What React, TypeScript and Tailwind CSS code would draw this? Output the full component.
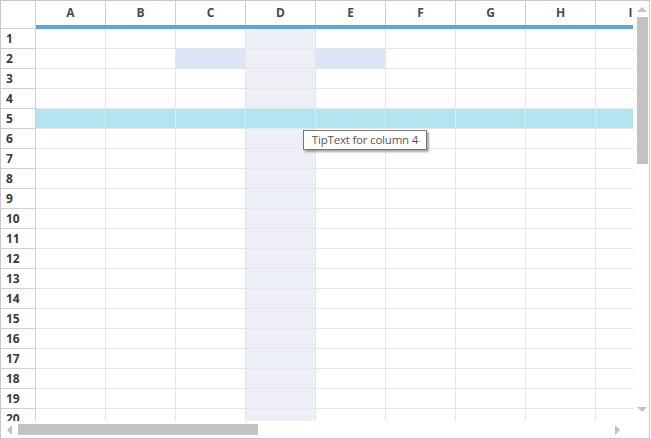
const cols = ['A', 'B', 'C', 'D', 'E', 'F', 'G', 'H', 'I', 'J']
const rows = Array.from({ length: 21 }, (_, i) => i + 1)

function cellBg(row: number, col: number) {
  if (row === 5) return 'bg-[#b3e5f0]'
  if (col === 3) return 'bg-[#eceff6]'
  if (row === 2 && (col === 2 || col === 4)) return 'bg-[#dbe5f5]'
  return 'bg-white'
}

export default function App() {
  return (
    <div className="w-[651px] h-[439px] bg-white font-['Open_Sans',sans-serif]">
      <div className="relative w-[650px] h-[439px] border border-[#c8c8c8] flex flex-col">
        <div className="flex h-[420px]">
          {/* grid viewport */}
          <div className="w-[632px] h-[420px] overflow-hidden flex flex-col">
            {/* header */}
            <div className="flex h-[28px] shrink-0">
              <div className="w-[35px] shrink-0 border-r border-b border-[#d0d0d0]" />
              {cols.map((c) => (
                <div key={c} className="w-[70px] shrink-0 flex flex-col">
                  <div className="h-[24px] border-r border-[#d0d0d0] flex items-center justify-center text-[12px] font-bold text-[#4a4a4a]">
                    {c}
                  </div>
                  <div className="h-[4px] bg-[#5ba7db]" />
                </div>
              ))}
            </div>
            {/* body */}
            {rows.map((r) => (
              <div key={r} className="flex h-[20px] shrink-0">
                <div className="w-[35px] shrink-0 border-r border-b border-[#d0d0d0] pl-[5px] flex items-center text-[12px] font-bold text-[#3a3a3a]">
                  {r}
                </div>
                {cols.map((c, i) => (
                  <div
                    key={c}
                    className={`w-[70px] shrink-0 border-r border-b border-[#e6e6e6] ${cellBg(r, i)}`}
                  />
                ))}
              </div>
            ))}
          </div>
          {/* vertical scrollbar */}
          <div className="w-[16px] flex flex-col items-center">
            <div className="h-[16px] flex items-center justify-center pt-[1px] pl-[2px]">
              <div className="w-0 h-0 border-l-[5px] border-r-[5px] border-b-[5px] border-l-transparent border-r-transparent border-b-[#c2c2c2]" />
            </div>
            <div className="w-[11px] h-[147px] bg-[#c2c2c2] ml-[2px]" />
            <div className="flex-1" />
            <div className="h-[14px] flex items-start justify-center pl-[2px]">
              <div className="w-0 h-0 border-l-[5px] border-r-[5px] border-t-[5px] border-l-transparent border-r-transparent border-t-[#c2c2c2]" />
            </div>
          </div>
        </div>
        {/* horizontal scrollbar */}
        <div className="flex h-[17px]">
          <div className="w-[632px] flex items-center">
            <div className="w-[17px] flex justify-center">
              <div className="w-0 h-0 border-t-[5px] border-b-[5px] border-r-[5px] border-t-transparent border-b-transparent border-r-[#c2c2c2]" />
            </div>
            <div className="w-[240px] h-[11px] bg-[#c2c2c2]" />
            <div className="flex-1" />
            <div className="w-[16px] flex justify-start mr-[2px]">
              <div className="w-0 h-0 border-t-[5px] border-b-[5px] border-l-[5px] border-t-transparent border-b-transparent border-l-[#c2c2c2]" />
            </div>
          </div>
        </div>
        {/* tooltip */}
        <div className="absolute left-[302px] top-[129px] w-[124px] h-[20px] flex items-center justify-center bg-white border border-[#767676] text-[11.5px] tracking-[-0.2px] text-[#575757] shadow-[2px_2px_2px_rgba(0,0,0,0.35)] whitespace-nowrap">
          TipText for column 4
        </div>
      </div>
    </div>
  )
}
